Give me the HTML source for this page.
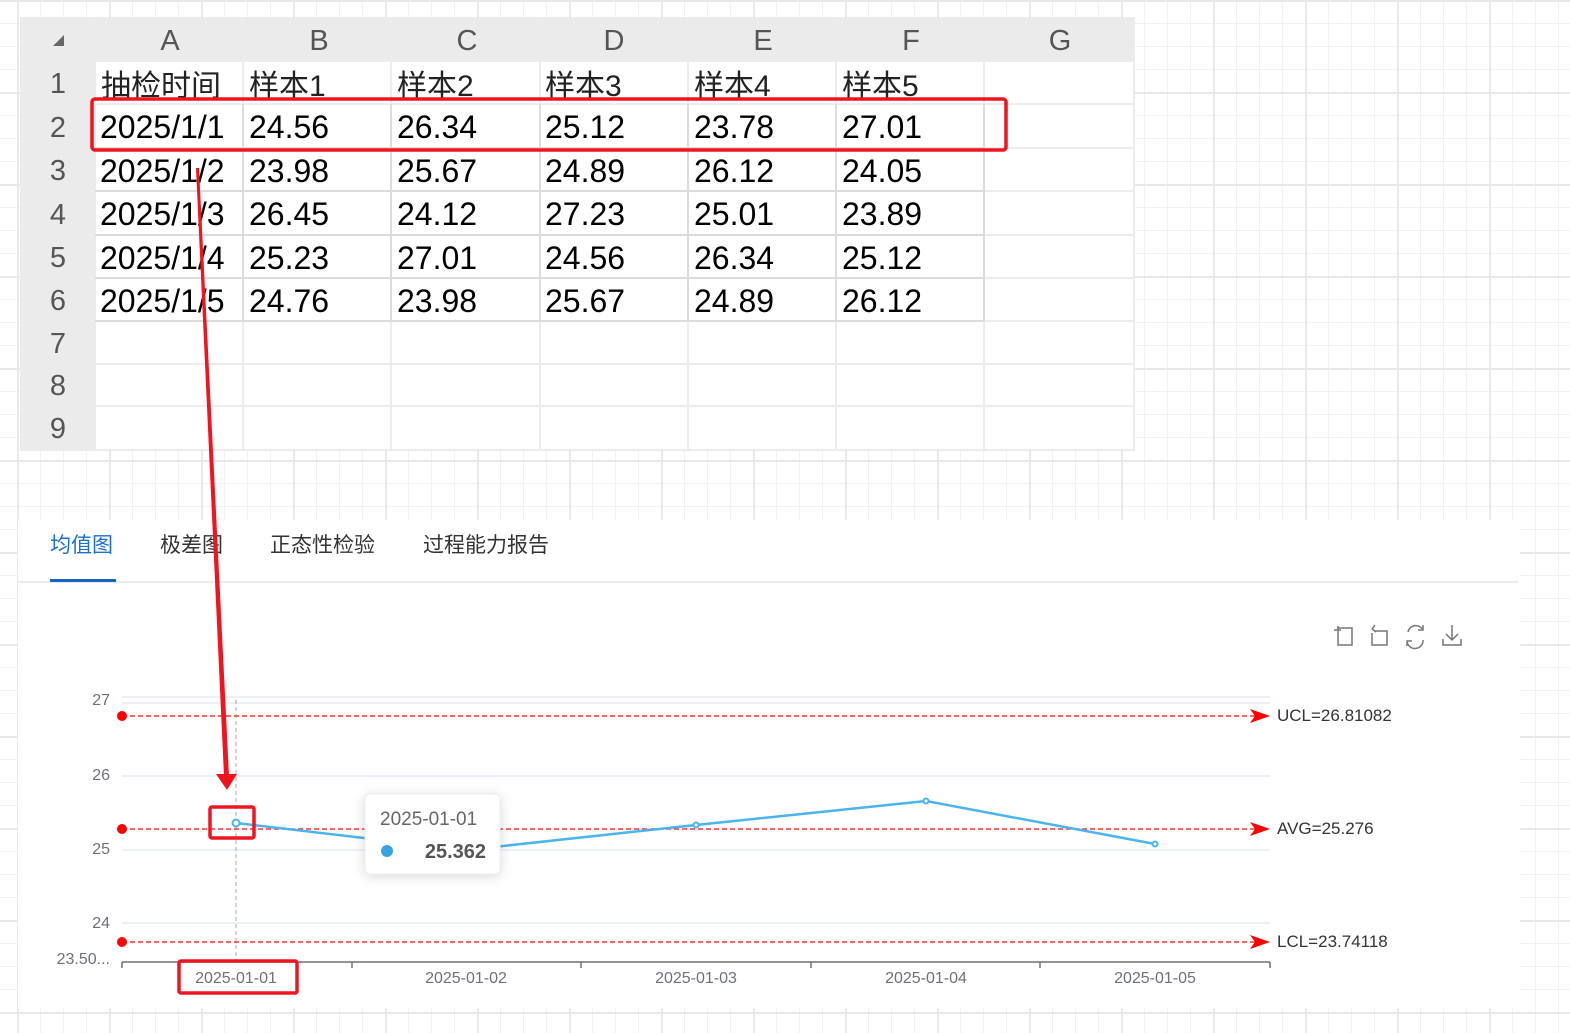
<!DOCTYPE html>
<html><head><meta charset="utf-8"><style>
html,body{margin:0;padding:0}
body{width:1570px;height:1033px;position:relative;overflow:hidden;background-color:#fff;
background-image:
linear-gradient(to right,#e8e8e8 2px,transparent 2px),
linear-gradient(to bottom,#e8e8e8 2px,transparent 2px),
linear-gradient(to right,#f2f2f2 1px,transparent 1px),
linear-gradient(to bottom,#f2f2f2 1px,transparent 1px);
background-size:92px 92px,92px 92px,23px 23px,23px 23px;
background-position:17px 0,0 0,17px 0,0 0;
font-family:"Liberation Sans","Noto Sans CJK SC",sans-serif}
.sheet{position:absolute;left:20px;top:17px;width:1115px;height:433px;background:#fff}
svg{position:absolute;left:0;top:0}
.panel{position:absolute;left:18px;top:520px;width:1502px;height:488px;background:#fff}
</style></head><body>
<div class="sheet"></div>
<div class="panel"></div>
<svg width="1570" height="1033" viewBox="0 0 1570 1033" font-family="Liberation Sans, Noto Sans CJK SC, sans-serif">
<rect x="20" y="17" width="1115" height="44" fill="#ebebeb"/>
<rect x="20" y="17" width="75" height="433" fill="#ebebeb"/>
<g stroke="#ececec" stroke-width="2">
<line x1="95" y1="17" x2="95" y2="450"/><line x1="243" y1="17" x2="243" y2="450"/><line x1="391" y1="17" x2="391" y2="450"/><line x1="540" y1="17" x2="540" y2="450"/><line x1="688" y1="17" x2="688" y2="450"/><line x1="836" y1="17" x2="836" y2="450"/><line x1="984" y1="17" x2="984" y2="450"/><line x1="1134" y1="17" x2="1134" y2="450"/>
<line x1="20" y1="61" x2="1135" y2="61"/><line x1="20" y1="104" x2="1135" y2="104"/><line x1="20" y1="148" x2="1135" y2="148"/><line x1="20" y1="191" x2="1135" y2="191"/><line x1="20" y1="235" x2="1135" y2="235"/><line x1="20" y1="278" x2="1135" y2="278"/><line x1="20" y1="321" x2="1135" y2="321"/><line x1="20" y1="364" x2="1135" y2="364"/><line x1="20" y1="406" x2="1135" y2="406"/><line x1="20" y1="450" x2="1135" y2="450"/>
</g>
<g stroke="#dcdcdc" stroke-width="2">
<line x1="243" y1="104" x2="243" y2="321"/><line x1="391" y1="104" x2="391" y2="321"/><line x1="540" y1="104" x2="540" y2="321"/><line x1="688" y1="104" x2="688" y2="321"/><line x1="836" y1="104" x2="836" y2="321"/><line x1="984" y1="104" x2="984" y2="321"/>
<line x1="95" y1="148" x2="984" y2="148"/><line x1="95" y1="191" x2="984" y2="191"/><line x1="95" y1="235" x2="984" y2="235"/><line x1="95" y1="278" x2="984" y2="278"/><line x1="95" y1="321" x2="984" y2="321"/>
</g>
<path d="M53 46 L64 35 L64 46Z" fill="#666"/>
<g fill="#555" font-size="29" text-anchor="middle">
<text x="170" y="50">A</text><text x="319" y="50">B</text><text x="467" y="50">C</text><text x="614" y="50">D</text><text x="763" y="50">E</text><text x="911" y="50">F</text><text x="1060" y="50">G</text>
<text x="58" y="93">1</text><text x="58" y="137">2</text><text x="58" y="180">3</text><text x="58" y="224">4</text><text x="58" y="267">5</text><text x="58" y="310">6</text><text x="58" y="353">7</text><text x="58" y="395">8</text><text x="58" y="438">9</text>
</g>
<g fill="#000" font-size="32">
<text x="101" y="96" fill="#222" font-size="30">抽检时间</text><text x="249" y="96" fill="#222" font-size="30">样本1</text><text x="397" y="96" fill="#222" font-size="30">样本2</text><text x="545" y="96" fill="#222" font-size="30">样本3</text><text x="694" y="96" fill="#222" font-size="30">样本4</text><text x="842" y="96" fill="#222" font-size="30">样本5</text>
<text x="100" y="138">2025/1/1</text><text x="249" y="138">24.56</text><text x="397" y="138">26.34</text><text x="545" y="138">25.12</text><text x="694" y="138">23.78</text><text x="842" y="138">27.01</text>
<text x="100" y="182">2025/1/2</text><text x="249" y="182">23.98</text><text x="397" y="182">25.67</text><text x="545" y="182">24.89</text><text x="694" y="182">26.12</text><text x="842" y="182">24.05</text>
<text x="100" y="225">2025/1/3</text><text x="249" y="225">26.45</text><text x="397" y="225">24.12</text><text x="545" y="225">27.23</text><text x="694" y="225">25.01</text><text x="842" y="225">23.89</text>
<text x="100" y="269">2025/1/4</text><text x="249" y="269">25.23</text><text x="397" y="269">27.01</text><text x="545" y="269">24.56</text><text x="694" y="269">26.34</text><text x="842" y="269">25.12</text>
<text x="100" y="312">2025/1/5</text><text x="249" y="312">24.76</text><text x="397" y="312">23.98</text><text x="545" y="312">25.67</text><text x="694" y="312">24.89</text><text x="842" y="312">26.12</text>
</g>
<g font-size="21" fill="#333">
<text x="50" y="552" fill="#1d6fcf">均值图</text><text x="160" y="552">极差图</text><text x="270" y="552">正态性检验</text><text x="423" y="552">过程能力报告</text>
</g>
<line x1="18" y1="582" x2="1518" y2="582" stroke="#ebebeb" stroke-width="2"/>
<rect x="50" y="579" width="66" height="3" fill="#1565c0"/>
<g fill="none" stroke="#777" stroke-width="1.5">
<path d="M1337 628 H1352 V645 H1338 V626 M1334 630 H1341"/>
<path d="M1374 631 H1387 V645 H1372 V633 M1372 629 L1375 625 M1372 629 L1376 632"/>
<path d="M1423 630 A8 8 0 0 0 1408 632 M1407 641 A8 8 0 0 0 1423 640 M1423 625 V630 H1418 M1407 646 V641 H1412"/>
<path d="M1452 625 V640 M1446 634 L1452 640 L1458 634 M1443 639 V645 H1461 V639"/>
</g>
<g stroke="#e6ebf5" stroke-width="1.5">
<line x1="122" y1="697" x2="1270" y2="697"/><line x1="122" y1="703" x2="1270" y2="703"/><line x1="122" y1="776" x2="1270" y2="776"/><line x1="122" y1="850" x2="1270" y2="850"/><line x1="122" y1="923" x2="1270" y2="923"/>
</g>
<line x1="122" y1="962" x2="1270" y2="962" stroke="#6e7079" stroke-width="1.5"/>
<g stroke="#6e7079" stroke-width="1.5"><line x1="122" y1="962" x2="122" y2="968"/><line x1="352" y1="962" x2="352" y2="968"/><line x1="581" y1="962" x2="581" y2="968"/><line x1="811" y1="962" x2="811" y2="968"/><line x1="1040" y1="962" x2="1040" y2="968"/><line x1="1270" y1="962" x2="1270" y2="968"/></g>
<g fill="#6e7079" font-size="16" text-anchor="end">
<text x="110" y="705">27</text><text x="110" y="780">26</text><text x="110" y="854">25</text><text x="110" y="928">24</text><text x="110" y="964">23.50...</text>
</g>
<g fill="#6e7079" font-size="16" text-anchor="middle">
<text x="236" y="983">2025-01-01</text><text x="466" y="983">2025-01-02</text><text x="696" y="983">2025-01-03</text><text x="926" y="983">2025-01-04</text><text x="1155" y="983">2025-01-05</text>
</g>
<line x1="236" y1="700" x2="236" y2="962" stroke="#aaa" stroke-dasharray="4 3"/>
<g stroke="#f33" stroke-width="1.5" stroke-dasharray="5 3">
<line x1="122" y1="716" x2="1255" y2="716"/><line x1="122" y1="829" x2="1255" y2="829"/><line x1="122" y1="942" x2="1255" y2="942"/>
</g>
<g fill="#f00">
<circle cx="122" cy="716" r="5"/><circle cx="122" cy="829" r="5"/><circle cx="122" cy="942" r="5"/>
<path d="M1250 709 L1270 716 L1250 723 L1255 716Z"/><path d="M1250 822 L1270 829 L1250 836 L1255 829Z"/><path d="M1250 935 L1270 942 L1250 949 L1255 942Z"/>
</g>
<g fill="#333" font-size="17">
<text x="1277" y="721">UCL=26.81082</text><text x="1277" y="834">AVG=25.276</text><text x="1277" y="947">LCL=23.74118</text>
</g>
<polyline points="236,823 466,850 696,825 926,801 1155,844" fill="none" stroke="#4ab4ee" stroke-width="2.5"/>
<g fill="#fff" stroke="#4ab4ee" stroke-width="2"><circle cx="236" cy="823" r="3.5"/><circle cx="696" cy="825" r="2.5"/><circle cx="926" cy="801" r="2.5"/><circle cx="1155" cy="844" r="2.5"/></g>
<rect x="365" y="794" width="135" height="80" rx="5" fill="#fff" stroke="#eee" style="filter:drop-shadow(0 2px 6px rgba(0,0,0,.15))"/>
<text x="380" y="825" font-size="19" fill="#666">2025-01-01</text>
<circle cx="387" cy="851" r="6" fill="#3aa2df"/>
<text x="486" y="858" font-size="20" font-weight="bold" fill="#555" text-anchor="end">25.362</text>
<g fill="none" stroke="#f0141e" stroke-width="3.5">
<rect x="92" y="99" width="914" height="51" rx="3"/>
<rect x="210" y="807" width="44" height="31" rx="2"/>
<rect x="179" y="961" width="118" height="32" rx="2"/>
</g>
<path d="M196 168 L199 168 L229 776 L224 776Z" fill="#f0141e"/>
<path d="M216 774 L237 774 L227 790Z" fill="#f0141e"/>
</svg>
</body></html>
